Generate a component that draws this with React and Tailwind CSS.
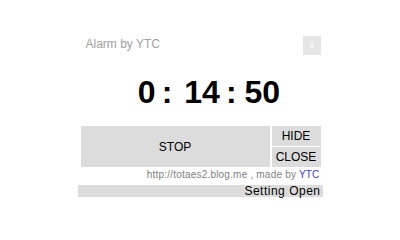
import React from "react";

export default function App() {
  const sans = { fontFamily: '"Liberation Sans", Arial, sans-serif' };

  return (
    <div className="w-[400px] h-[225px] bg-white overflow-hidden" style={sans}>
      <div className="w-[245px] mx-auto pt-[36px]">
        {/* title bar */}
        <div className="flex justify-between items-start h-[19px]">
          <span className="pl-2 text-[12px] leading-[16px] text-[#a0a0a0]">Alarm by YTC</span>
          <button className="w-[18px] h-[19px] mr-[2px] bg-[#e6e6e6] text-white text-[9px] leading-[19px] text-center">x</button>
        </div>

        {/* timer */}
        <div className="mt-[21px] h-[32px] pl-[18px] flex justify-center items-baseline text-[32px] leading-[32px] font-bold text-black">
          <span>0</span>
          <span className="ml-[6px]">:</span>
          <span className="ml-[12px]">14</span>
          <span className="ml-[6px]">:</span>
          <span className="ml-[8px]">50</span>
        </div>

        {/* buttons */}
        <div className="mt-[18px] pl-[3px] pr-[2px] flex gap-[2px] h-[41px]">
          <button className="w-[189px] h-full bg-[#dcdcdc] text-[12px] text-black">STOP</button>
          <div className="flex-1 flex flex-col gap-[1px]">
            <button className="h-[20px] bg-[#dcdcdc] text-[12px] leading-[20px] text-black">HIDE</button>
            <button className="h-[20px] bg-[#dcdcdc] text-[12px] leading-[20px] text-black">CLOSE</button>
          </div>
        </div>

        {/* link */}
        <div className="mt-[2px] pr-[3px] text-right text-[10px] leading-[12px] text-[#808080] tracking-[0.2px]">
          http://totaes2.blog.me , made by <span className="text-[#3b3bd0]">YTC</span>
        </div>

        {/* setting */}
        <div className="mt-[4px] h-[12px] bg-[#dcdcdc] text-right pr-[2px] text-[12px] leading-[12px] text-black tracking-[0.5px]">
          Setting Open
        </div>
      </div>
    </div>
  );
}
